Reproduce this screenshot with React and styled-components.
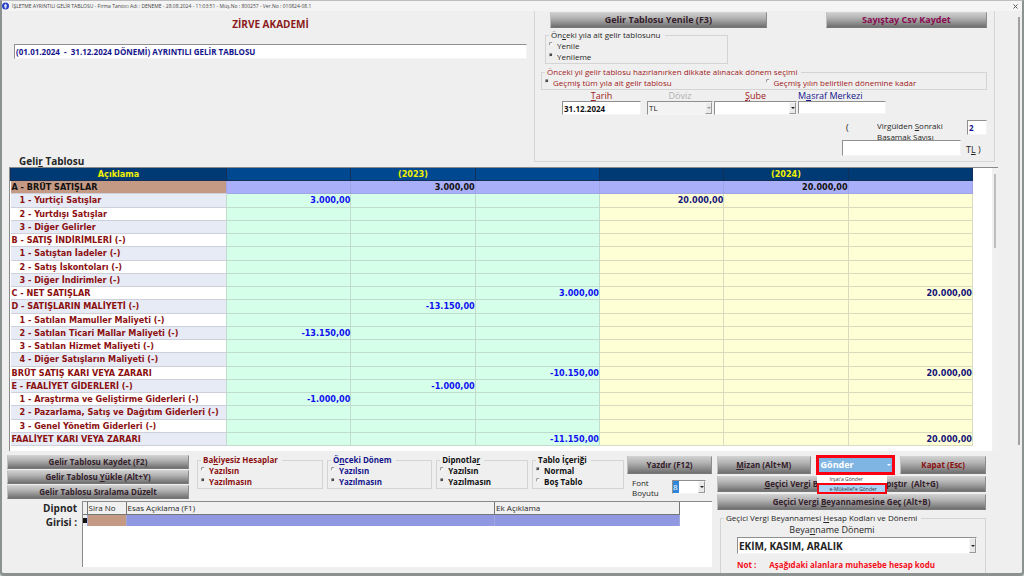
import React from "react";
import styled, { createGlobalStyle } from "styled-components";

const ui = `"Open Sans", "Noto Sans", sans-serif`;
const grid = `"DejaVu Sans Condensed", "DejaVu Sans", sans-serif`;
const red = "#8b1010";
const navy = "#14148c";

const GlobalStyle = createGlobalStyle`
  *, *::before, *::after { box-sizing: border-box; }
  body { margin: 0; background: #c3cbc8; font-family: ${ui}; font-size: 8px; line-height: 10px; color: #262626; }
  button, input, select { font: inherit; color: inherit; margin: 0; padding: 0; border-radius: 0; }
  fieldset { margin: 0; padding: 0; min-width: 0; }
`;

/* ---------- window ---------- */
const Window = styled.div`
  min-height: 100vh;
  display: flex;
  flex-direction: column;
  background: #efefef;
  border: solid #8b9290;
  border-width: 1px 2px 3px;
  border-top-color: #bdbdbd;
  border-radius: 0 0 4px 4px;
  overflow: hidden;
`;
const TitleBar = styled.header`
  display: flex;
  align-items: center;
  gap: 3px;
  height: 10px;
  padding: 0 4px 0 0;
  background: #f4f4f4;
  font-size: 5px;
  color: #444;
  white-space: nowrap;
`;
const CloseButton = styled.button`
  margin-left: auto;
  display: flex;
  border: 0;
  background: none;
  color: #555;
`;
const Body = styled.div`
  flex: 1;
  display: flex;
`;
const Content = styled.main`
  flex: 1;
  min-width: 0;
  display: flex;
  flex-direction: column;
  padding: 0 20px 0 5px;
`;
const PageScroll = styled.div`
  width: 4px;
  padding-top: 6px;
  &::before {
    content: "";
    display: block;
    width: 2px;
    height: 77%;
    background: #a2a2a2;
  }
`;

/* ---------- shared controls ---------- */
const Button = styled.button`
  display: flex;
  align-items: center;
  justify-content: center;
  flex: ${(p) => p.$flex || "0 0 auto"};
  min-width: 0;
  height: ${(p) => p.$h || 14}px;
  border: 1px solid;
  border-color: #d2d2d2 #8c8c8c #777 #c0c0c0;
  background: linear-gradient(#cdcdcd, #b4b4b4 35%, #6f6f6f);
  color: ${(p) => p.$color || "#33202a"};
  font-size: ${(p) => p.$size || 8}px;
  font-weight: 700;
  white-space: pre;
`;
const sunken = `
  border: 1px solid;
  border-color: #8f8f8f #f4f4f4 #f4f4f4 #8f8f8f;
  background: #fff;
`;
const TextBox = styled.input`
  ${sunken}
  display: block;
  width: 100%;
  height: ${(p) => p.$h || 14}px;
  padding-left: 1px;
  font-weight: 700;
  color: ${(p) => p.$color || "#111"};
  outline: 0;
`;
const ComboFrame = styled.div`
  ${sunken}
  display: flex;
  width: 100%;
  height: ${(p) => p.$h || 14}px;
  background: ${(p) => (p.$off ? "#f3f3f3" : "#fff")};
`;
const ComboSelect = styled.select`
  flex: 1;
  min-width: 0;
  appearance: none;
  border: 0;
  padding-left: 1px;
  background: none;
  font-size: ${(p) => p.$size || 8}px;
  font-weight: ${(p) => (p.$bold ? 700 : 400)};
  color: #222;
  opacity: 1;
  outline: 0;
  white-space: nowrap;
`;
const ComboArrow = styled.span`
  flex: 0 0 7px;
  display: flex;
  align-items: center;
  justify-content: center;
  border: 1px solid;
  border-color: #f6f6f6 #999 #999 #f6f6f6;
  background: #e9e9e9;
  &::after {
    content: "";
    border: 2px solid transparent;
    border-bottom: 0;
    border-top-color: ${(p) => (p.$off ? "#999" : "#222")};
  }
`;
const Group = styled.fieldset`
  flex: ${(p) => p.$flex || "0 0 auto"};
  border: 1px solid #d4d4d4;
  padding: 0 0 1px 3px;
  color: ${(p) => p.$color || "#262626"};
  font-weight: ${(p) => (p.$bold ? 700 : 400)};
  legend {
    padding: 0 4px 0 2px;
    line-height: 10px;
    white-space: nowrap;
  }
`;
const RadioLabel = styled.label`
  display: flex;
  align-items: center;
  gap: 4px;
  line-height: 11px;
  white-space: nowrap;
`;
const RadioInput = styled.input`
  appearance: none;
  flex: none;
  width: 4px;
  height: 4px;
  margin: 0 0 3px;
  border: 1px solid;
  border-color: #8f8f8f #f4f4f4 #f4f4f4 #8f8f8f;
  border-radius: 50%;
  background: #fff;
  &:checked { background: #444; }
`;

/* Underlines the letter that follows "&". */
function Hot({ children }) {
  const i = children.indexOf("&");
  if (i < 0) return children;
  return (
    <span>
      {children.slice(0, i)}
      <u>{children[i + 1]}</u>
      {children.slice(i + 2)}
    </span>
  );
}
function Radio({ name, checked, children }) {
  return (
    <RadioLabel>
      <RadioInput type="radio" name={name} defaultChecked={checked} />
      {children}
    </RadioLabel>
  );
}
function Combo({ id, value, h, size, bold, off }) {
  return (
    <ComboFrame $h={h} $off={off}>
      <ComboSelect id={id} $size={size} $bold={bold} disabled={off}>
        <option>{value}</option>
      </ComboSelect>
      <ComboArrow $off={off} />
    </ComboFrame>
  );
}

/* ---------- top area ---------- */
const Top = styled.section`
  display: flex;
  gap: 7px;
  padding-right: 3px;
  height: 156px;
`;
const Heading = styled.div`
  flex: 1;
  min-width: 0;
  display: flex;
  flex-direction: column;
  padding: 6px 0 0 7px;
`;
const Company = styled.h1`
  margin: 0 0 13px;
  font-size: 10px;
  line-height: 14px;
  text-align: center;
  color: #8b1a1a;
`;
const TableTitle = styled.h2`
  margin: auto 0 0 5px;
  font-size: 10px;
  line-height: 12px;
`;
const Panel = styled.div`
  flex: 0 1 461px;
  height: 151px;
  padding: 0 7px 0 6px;
  border: 1px solid #d6d6d6;
  border-top: 0;
`;
const PanelButtons = styled.div`
  display: flex;
  gap: 59px;
  padding: 1px 0 2px 9px;
`;
const RenewGroup = styled(Group)`
  width: 183px;
  margin: 0 0 3px 4px;
`;
const Choices = styled.div`
  display: grid;
  grid-template-columns: 1fr 1fr;
`;
const Fields = styled.div`
  display: grid;
  grid-template-columns: 85px 67px 84px 88px;
  padding: 0 0 5px 21px;
`;
const Field = styled.div`
  margin-right: ${(p) => p.$gap || 0}px;
`;
const FieldLabel = styled.label`
  display: block;
  font-size: 9px;
  line-height: 11px;
  text-align: ${(p) => p.$align || "center"};
  color: ${(p) => p.$color};
`;
const Digits = styled.div`
  display: flex;
  justify-content: flex-end;
  align-items: flex-start;
  height: 20px;
  label { width: 90px; height: 20px; overflow: hidden; line-height: 11px; }
  > span { width: 31px; font-size: 9px; line-height: 16px; }
  > div { width: 20px; }
`;
const Amount = styled.div`
  display: flex;
  justify-content: flex-end;
  gap: 5px;
  font-size: 9px;
  line-height: 20px;
  > div { width: 119px; }
  > label { width: 21px; }
`;

/* ---------- income table ---------- */
const GridFrame = styled.section`
  display: flex;
  height: 284px;
  margin-left: 2px;
  border: solid #8a8a8a;
  border-width: 1px 0 0 1px;
  background: #fff;
`;
const GridArea = styled.div`
  flex: 1;
  min-width: 0;
`;
const Grid = styled.table`
  width: 100%;
  height: 278px;
  border-collapse: collapse;
  table-layout: fixed;
  font-family: ${grid};
  font-size: 9px;
  line-height: 12px;
  font-weight: 700;
`;
const NameCol = styled.col`
  width: 216px;
`;
const HeadCell = styled.th`
  padding: 0;
  border: 1px solid #10305a;
  border-top: 0;
  background: ${(p) => (p.$light ? "#004890" : "#003a74")};
  color: #f2f200;
`;
const NameCell = styled.th`
  padding: 0 0 0 ${(p) => (p.$child ? 9 : 1)}px;
  border-bottom: 1px solid #cdd0da;
  text-align: left;
  white-space: nowrap;
  color: ${red};
  background: ${(p) => (p.$odd ? "#e7ebf6" : "#fff")};
`;
const ValueCell = styled.td`
  padding: 0;
  border: 1px solid ${(p) => (p.$next ? "#d9dbc0" : "#bfdccf")};
  text-align: right;
  color: ${(p) => (p.$next ? "#141478" : "#1010f0")};
  background: ${(p) => (p.$next ? "#ffffd6" : "#d6ffea")};
`;
const Row = styled.tr`
  &:first-child ${NameCell} { background: #c59a84; color: #111; }
  &:first-child ${ValueCell} { background: #a9aff9; color: #111; border-color: #9ea4e6; }
`;
const GridScroll = styled.div`
  width: 6px;
  margin-left: 19px;
  padding: 6px 0 0 2px;
  background: #f0f0f0;
  &::before {
    content: "";
    display: block;
    width: 2px;
    height: 74px;
    background: #bdbdbd;
  }
`;

/* ---------- bottom area ---------- */
const Bottom = styled.section`
  flex: 1;
  display: flex;
  gap: 5px;
  padding: 4px 12px 0 0;
`;
const BottomLeft = styled.div`
  flex: 1;
  min-width: 0;
`;
const Options = styled.div`
  display: flex;
  height: 46px;
`;
const Stack = styled.div`
  flex: 0 0 182px;
  display: flex;
  flex-direction: column;
  gap: 1px;
  margin-right: 8px;
`;
const Groups = styled.div`
  flex: 1;
  min-width: 0;
  display: flex;
  align-items: flex-start;
  gap: 4px;
  margin-right: 3px;
`;
const PrintBox = styled.div`
  flex: 0 0 85px;
  display: flex;
  flex-direction: column;
  padding-top: 1px;
`;
const FontSize = styled.div`
  display: flex;
  justify-content: space-between;
  padding: 4px 6px 0 5px;
  > div { width: 34px; }
`;
const FontSelect = styled.div`
  ${sunken}
  display: flex;
  height: 14px;
  margin-top: 2px;
  select {
    flex: 1;
    min-width: 0;
    appearance: none;
    border: 0;
    background: linear-gradient(90deg, #2f86d8 6px, #fff 6px);
    color: #fff;
    outline: 0;
  }
`;
const Notes = styled.div`
  display: flex;
  gap: 5px;
`;
const NotesLabel = styled.div`
  flex: 0 0 70px;
  font-size: 10px;
  font-weight: 700;
  line-height: 14px;
  text-align: right;
`;
const NotesFrame = styled.div`
  flex: 1;
  height: 66px;
  border: solid #8a8a8a;
  border-width: 1px 0 0 1px;
  background: #fff;
`;
const NotesTable = styled.table`
  width: calc(100% - 32px);
  border-collapse: collapse;
  table-layout: fixed;
  th {
    height: 12px;
    padding: 0 0 0 1px;
    border: 1px solid #777;
    border-width: 0 1px 1px 0;
    background: #f0f0f0;
    font-weight: 400;
    text-align: left;
    line-height: 11px;
  }
  td { height: 12px; padding: 0; background: #9198e2; border-right: 1px solid #a3a8dc; }
  td:nth-child(1) { background: #efefef; }
  td:nth-child(2) { background: #c59a84; }
  col:nth-child(1) { width: 4px; }
  col:nth-child(2) { width: 39px; }
  col:nth-child(4) { width: 31%; }
`;
const RowMark = styled.span`
  display: block;
  width: 4px;
  height: 5px;
  background: #111;
`;
const BottomRight = styled.div`
  flex: 0 0 269px;
  display: flex;
  flex-direction: column;
  gap: 2px;
  padding-top: 1px;
`;
const Actions = styled.div`
  display: flex;
  gap: 5px;
  height: 18px;
`;
const SendBox = styled.div`
  position: relative;
  flex: 81;
  margin-top: -1px;
`;
const SendButton = styled.button`
  display: flex;
  align-items: center;
  justify-content: space-between;
  width: 100%;
  height: 20px;
  padding: 0 1px 0 2px;
  border: 3px solid #fa0010;
  background: #7fb5e3;
  color: #fff;
  font-size: 9px;
  font-weight: 700;
  &::after {
    content: "";
    border: 2px solid transparent;
    border-bottom: 0;
    border-top-color: #fff;
  }
`;
const Menu = styled.div`
  position: absolute;
  z-index: 1;
  top: 20px;
  left: 1px;
  width: 70px;
  display: flex;
  flex-direction: column;
  background: #fff;
`;
const MenuItem = styled.button`
  height: ${(p) => (p.$active ? 11 : 8)}px;
  border: ${(p) => (p.$active ? "2px solid #fa0010" : "0")};
  padding-left: ${(p) => (p.$active ? 11 : 13)}px;
  background: ${(p) => (p.$active ? "#acd3f3" : "#fff")};
  color: #333;
  font-size: 5px;
  line-height: 6px;
  text-align: left;
  white-space: nowrap;
`;
const TaxGroup = styled(Group)`
  flex: 1;
  margin: 1px 0 0 3px;
  padding: 0 8px 0 16px;
  border-bottom: 0;
  legend { margin-left: -13px; }
`;
const TaxLabel = styled.label`
  display: block;
  padding-right: 50px;
  font-size: 9px;
  line-height: 14px;
  text-align: center;
`;
const Warning = styled.p`
  display: flex;
  gap: 13px;
  margin: 5px 0 0;
  color: #f5101c;
  font-weight: 700;
  line-height: 11px;
`;

/* [name, 2023 column, 2023 value, 2024 column, 2024 value]; columns count from 0 */
const rows = [
  ["A - BRÜT SATIŞLAR", 1, "3.000,00", 1, "20.000,00"],
  ["1 - Yurtiçi Satışlar", 0, "3.000,00", 0, "20.000,00"],
  ["2 - Yurtdışı Satışlar"],
  ["3 - Diğer Gelirler"],
  ["B - SATIŞ İNDİRİMLERİ (-)"],
  ["1 - Satıştan İadeler (-)"],
  ["2 - Satış İskontoları (-)"],
  ["3 - Diğer İndirimler (-)"],
  ["C - NET SATIŞLAR", 2, "3.000,00", 2, "20.000,00"],
  ["D - SATIŞLARIN MALİYETİ (-)", 1, "-13.150,00"],
  ["1 - Satılan Mamuller Maliyeti (-)"],
  ["2 - Satılan Ticari Mallar Maliyeti (-)", 0, "-13.150,00"],
  ["3 - Satılan Hizmet Maliyeti (-)"],
  ["4 - Diğer Satışların Maliyeti (-)"],
  ["BRÜT SATIŞ KARI VEYA ZARARI", 2, "-10.150,00", 2, "20.000,00"],
  ["E - FAALİYET GİDERLERİ (-)", 1, "-1.000,00"],
  ["1 - Araştırma ve Geliştirme Giderleri (-)", 0, "-1.000,00"],
  ["2 - Pazarlama, Satış ve Dağıtım Giderleri (-)"],
  ["3 - Genel Yönetim Giderleri (-)"],
  ["FAALİYET KARI VEYA ZARARI", 2, "-11.150,00", 2, "20.000,00"],
];

const heads = ["Açıklama", "", "(2023)", "", "", "(2024)", ""];

const optionGroups = [
  { name: "bakiyesiz", title: "Ba&kiyesiz Hesaplar", color: red, flex: 128, items: ["Yazılsın", "Yazılmasın"], on: 1 },
  { name: "onceki", title: "Ö&nceki Dönem", color: navy, flex: 106, items: ["Yazılsın", "Yazılmasın"], on: 1 },
  { name: "dipnot", title: "Dipnotla&r", color: "#111", flex: 92, items: ["Yazılsın", "Yazılmasın"], on: 1 },
  { name: "icerik", title: "Tablo İ&çeriği", color: "#111", flex: 92, items: ["Normal", "Boş Tablo"], on: 0 },
];

export default function App() {
  return (
    <>
      <GlobalStyle />
      <Window>
        <TitleBar>
          <svg width="7" height="8" viewBox="0 0 14 16" aria-hidden="true">
            <circle cx="7" cy="8" r="7" fill="#2a3fc4" />
            <path d="M7 3 L10 7 L8 13 H6 L4 7 Z" fill="#cfd8ff" />
          </svg>
          İŞLETME AYRINTILI GELİR TABLOSU - Firma Tanıtıcı Adı : DENEME - 28.08.2024 - 11:03:51 - Müş.No : 800257 -
          Ver.No : 010824-08.1
          <CloseButton aria-label="Kapat">
            <svg width="5" height="5" viewBox="0 0 5 5" stroke="currentColor" aria-hidden="true">
              <path d="M0.5 0.5 L4.5 4.5 M4.5 0.5 L0.5 4.5" />
            </svg>
          </CloseButton>
        </TitleBar>
        <Body>
          <Content>
            <Top>
              <Heading>
                <Company>ZİRVE AKADEMİ</Company>
                <TextBox
                  aria-label="Tablo başlığı"
                  $color={navy}
                  $h={15}
                  defaultValue={"(01.01.2024\u00a0 -\u00a0 31.12.2024 DÖNEMİ) AYRINTILI GELİR TABLOSU"}
                />
                <TableTitle>
                  <Hot>Geli&r Tablosu</Hot>
                </TableTitle>
              </Heading>
              <Panel>
                <PanelButtons>
                  <Button $flex="217" $h={16} $size={9}>Gelir Tablosu Yenile (F3)</Button>
                  <Button $flex="161" $h={16} $size={9} $color="#8a0a50">Sayıştay Csv Kaydet</Button>
                </PanelButtons>
                <RenewGroup>
                  <legend><Hot>Ön&ceki yıla ait gelir tablosunu</Hot></legend>
                  <Radio name="yenile">Yenile</Radio>
                  <Radio name="yenile" checked>Yenileme</Radio>
                </RenewGroup>
                <Group $color="#a02020">
                  <legend>Önceki yıl gelir tablosu hazırlanırken dikkate alınacak dönem seçimi</legend>
                  <Choices>
                    <Radio name="donem" checked>Geçmiş tüm yıla ait gelir tablosu</Radio>
                    <Radio name="donem">Geçmiş yılın belirtilen dönemine kadar</Radio>
                  </Choices>
                </Group>
                <Fields>
                  <Field $gap={6}>
                    <FieldLabel htmlFor="tarih" $color="#a02020"><Hot>&Tarih</Hot></FieldLabel>
                    <TextBox id="tarih" defaultValue="31.12.2024" />
                  </Field>
                  <Field $gap={1}>
                    <FieldLabel htmlFor="doviz" $color="#b0b0b0">Döviz</FieldLabel>
                    <Combo id="doviz" value="TL" off />
                  </Field>
                  <Field $gap={1}>
                    <FieldLabel htmlFor="sube" $color="#a02020"><Hot>&Şube</Hot></FieldLabel>
                    <Combo id="sube" value="" />
                  </Field>
                  <Field>
                    <FieldLabel htmlFor="masraf" $color={navy} $align="left"><Hot>M&asraf Merkezi</Hot></FieldLabel>
                    <TextBox id="masraf" $h={13} />
                  </Field>
                </Fields>
                <Digits>
                  <span>(</span>
                  <label htmlFor="basamak">
                    <Hot>Virgülden &Sonraki</Hot>
                    <br />
                    Basamak Sayısı
                  </label>
                  <div><TextBox id="basamak" $h={15} $color={navy} defaultValue="2" /></div>
                </Digits>
                <Amount>
                  <div><TextBox id="tutar" $h={16} /></div>
                  <label htmlFor="tutar"><Hot>T&L )</Hot></label>
                </Amount>
              </Panel>
            </Top>

            <GridFrame>
              <GridArea>
                <Grid>
                  <colgroup>
                    <NameCol />
                    <col span={6} />
                  </colgroup>
                  <thead>
                    <tr>
                      {heads.map((h, i) => (
                        <HeadCell key={i} scope="col" $light={i > 0 && i < 4}>{h}</HeadCell>
                      ))}
                    </tr>
                  </thead>
                  <tbody>
                    {rows.map(([name, c1, v1, c2, v2], r) => (
                      <Row key={r}>
                        <NameCell scope="row" $odd={r % 2 === 1} $child={/^\d/.test(name)}>{name}</NameCell>
                        {[0, 1, 2].map((c) => <ValueCell key={c}>{c === c1 ? v1 : ""}</ValueCell>)}
                        {[0, 1, 2].map((c) => <ValueCell key={c} $next>{c === c2 ? v2 : ""}</ValueCell>)}
                      </Row>
                    ))}
                  </tbody>
                </Grid>
              </GridArea>
              <GridScroll />
            </GridFrame>

            <Bottom>
              <BottomLeft>
                <Options>
                  <Stack>
                    <Button>Gelir Tablosu Kaydet (F2)</Button>
                    <Button><Hot>Gelir Tablosu &Yükle (Alt+Y)</Hot></Button>
                    <Button>Gelir Tablosu Sıralama Düzelt</Button>
                  </Stack>
                  <Groups>
                    {optionGroups.map((g) => (
                      <Group key={g.name} $flex={g.flex} $color={g.color} $bold>
                        <legend><Hot>{g.title}</Hot></legend>
                        {g.items.map((t, i) => (
                          <Radio key={t} name={g.name} checked={i === g.on}>{t}</Radio>
                        ))}
                      </Group>
                    ))}
                  </Groups>
                  <PrintBox>
                    <Button $h={18}>Yazdır (F12)</Button>
                    <FontSize>
                      <label htmlFor="font">Font<br />Boyutu</label>
                      <div>
                        <FontSelect>
                          <select id="font"><option>8</option></select>
                          <ComboArrow />
                        </FontSelect>
                      </div>
                    </FontSize>
                  </PrintBox>
                </Options>
                <Notes>
                  <NotesLabel>Dipnot<br />Girisi :</NotesLabel>
                  <NotesFrame>
                    <NotesTable>
                      <colgroup><col /><col /><col /><col /></colgroup>
                      <thead>
                        <tr>
                          <th />
                          <th>Sira No</th>
                          <th>Esas Açıklama (F1)</th>
                          <th>Ek Açıklama</th>
                        </tr>
                      </thead>
                      <tbody>
                        <tr><td><RowMark /></td><td /><td /><td /></tr>
                      </tbody>
                    </NotesTable>
                  </NotesFrame>
                </Notes>
              </BottomLeft>
              <BottomRight>
                <Actions>
                  <Button $flex="93" $h={18}><Hot>&Mizan (Alt+M)</Hot></Button>
                  <SendBox>
                    <SendButton aria-haspopup="menu" aria-expanded="true">Gönder</SendButton>
                    <Menu role="menu">
                      <MenuItem role="menuitem">Irşat'a Gönder</MenuItem>
                      <MenuItem role="menuitem" $active>e-Mükellef'e Gönder</MenuItem>
                    </Menu>
                  </SendBox>
                  <Button $flex="85" $h={18} $color={red}>Kapat (Esc)</Button>
                </Actions>
                <Button $h={16}><Hot>{"&Geçici Vergi Beyannamesini Yapıştır  (Alt+G)"}</Hot></Button>
                <Button $h={16}><Hot>Geçici Vergi &Beyannamesine Geç (Alt+B)</Hot></Button>
                <TaxGroup>
                  <legend><Hot>Geçici Vergi Beyannamesi &Hesap Kodları ve Dönemi</Hot></legend>
                  <TaxLabel htmlFor="beyan"><Hot>Beya&nname Dönemi</Hot></TaxLabel>
                  <Combo id="beyan" value="EKİM, KASIM, ARALIK" h={17} size={10} bold />
                  <Warning>
                    <span>Not :</span>
                    <span>Aşağıdaki alanlara muhasebe hesap kodu</span>
                  </Warning>
                </TaxGroup>
              </BottomRight>
            </Bottom>
          </Content>
          <PageScroll />
        </Body>
      </Window>
    </>
  );
}
